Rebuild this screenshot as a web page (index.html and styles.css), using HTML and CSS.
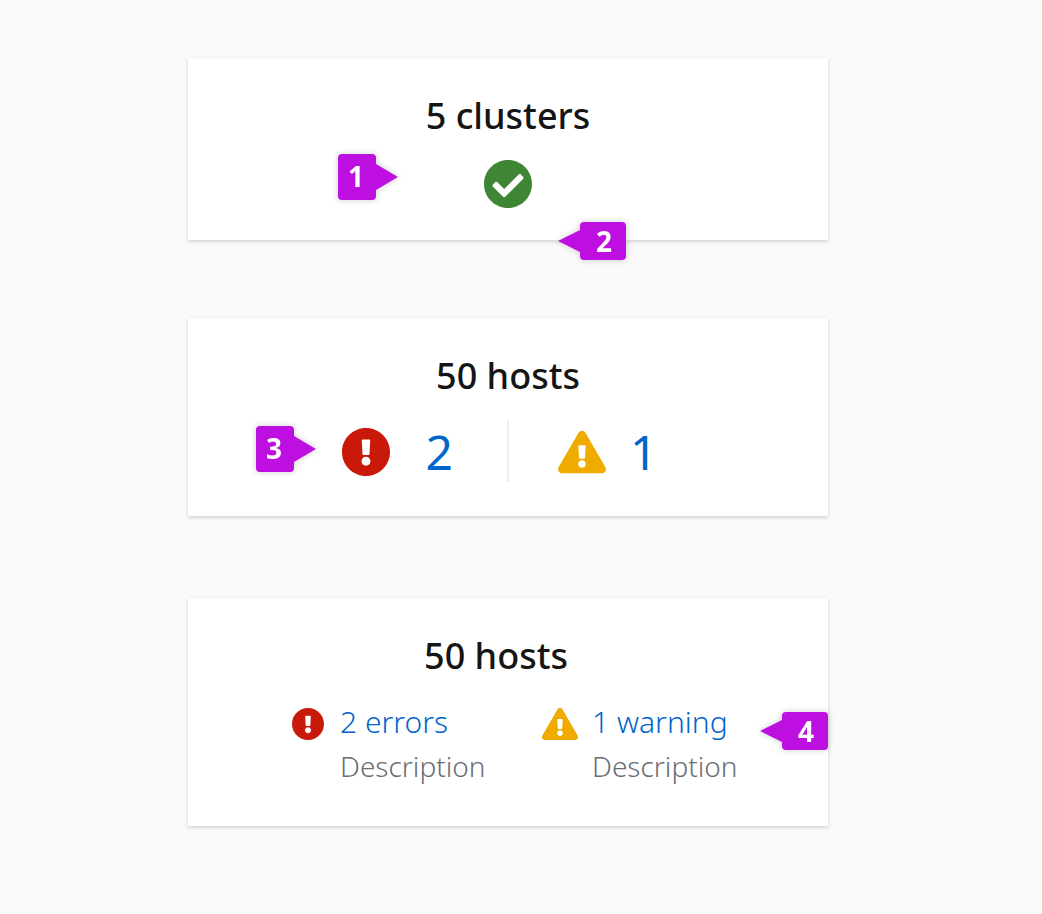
FILE: index.html
```html
<!DOCTYPE html>
<html lang="en">
<head>
<meta charset="utf-8">
<title>Aggregate status cards</title>
<link rel="stylesheet" href="styles.css">
</head>
<body>
<svg class="sprite" aria-hidden="true">
  <symbol id="check" viewBox="8 8 496 496"><path d="M504 256c0 136.967-111.033 248-248 248S8 392.967 8 256 119.033 8 256 8s248 111.033 248 248zM227.314 387.314l184-184c6.248-6.248 6.248-16.379 0-22.627l-22.627-22.627c-6.248-6.249-16.379-6.249-22.628 0L216 308.118l-70.059-70.059c-6.248-6.248-16.379-6.248-22.628 0l-22.627 22.627c-6.248 6.248-6.248 16.379 0 22.627l104 104c6.249 6.249 16.379 6.249 22.628.001z"/></symbol>
  <symbol id="error" viewBox="8 8 496 496"><path d="M504 256c0 136.997-111.043 248-248 248S8 392.997 8 256C8 119.083 119.043 8 256 8s248 111.083 248 248zm-248 50c-25.405 0-46 20.595-46 46s20.595 46 46 46 46-20.595 46-46-20.595-46-46-46zm-43.673-165.346l7.418 136c.347 6.364 5.609 11.346 11.982 11.346h48.546c6.373 0 11.635-4.982 11.982-11.346l7.418-136c.375-6.874-5.098-12.654-11.982-12.654h-63.383c-6.884 0-12.356 5.78-11.981 12.654z"/></symbol>
  <symbol id="warning" viewBox="0 0 576 512"><path d="M569.517 440.013C587.975 472.007 564.806 512 527.94 512H48.054c-36.937 0-59.999-40.055-41.577-71.987L246.423 23.985c18.467-32.009 64.72-31.951 83.154 0l239.94 416.028zM288 354c-25.405 0-46 20.595-46 46s20.595 46 46 46 46-20.595 46-46-20.595-46-46-46zm-43.673-165.346l7.418 136c.347 6.364 5.609 11.346 11.982 11.346h48.546c6.373 0 11.635-4.982 11.982-11.346l7.418-136c.375-6.874-5.098-12.654-11.982-12.654h-63.383c-6.884 0-12.356 5.78-11.981 12.654z"/></symbol>
</svg>
<main class="page">
  <section class="card">
    <h2 class="card-title">5 clusters</h2>
    <div class="status-row"><svg class="icon icon-large success" role="img" aria-label="Success"><use href="#check"/></svg></div>
    <span class="marker marker-right marker-1">1</span>
    <span class="marker marker-left marker-2">2</span>
  </section>
  <section class="card card-counts">
    <h2 class="card-title">50 hosts</h2>
    <div class="count-row">
      <div class="count count-start"><svg class="icon icon-large danger" role="img" aria-label="Errors"><use href="#error"/></svg><a class="count-link" href="#errors">2</a></div>
      <div class="divider"></div>
      <div class="count count-end"><svg class="icon icon-large caution" role="img" aria-label="Warnings"><use href="#warning"/></svg><a class="count-link" href="#warnings">1</a></div>
    </div>
    <span class="marker marker-right marker-3">3</span>
  </section>
  <section class="card card-detail">
    <h2 class="card-title">50 hosts</h2>
    <div class="detail-row">
      <div class="detail">
        <svg class="icon icon-small danger" role="img" aria-label="Errors"><use href="#error"/></svg>
        <div><a class="detail-link" href="#errors">2 errors</a><p class="detail-text">Description</p></div>
      </div>
      <div class="detail">
        <svg class="icon icon-small caution" role="img" aria-label="Warnings"><use href="#warning"/></svg>
        <div><a class="detail-link" href="#warnings">1 warning</a><p class="detail-text">Description</p></div>
      </div>
    </div>
    <span class="marker marker-left marker-4">4</span>
  </section>
</main>
</body>
</html>
```
FILE: styles.css
```css
* { box-sizing: border-box; }
body { margin: 0; background: #fafafa; color: #151515; font-family: "Noto Sans", "Open Sans", sans-serif; }
.sprite { position: absolute; width: 0; height: 0; }
.page { display: flex; flex-direction: column; gap: 78px; padding: 58px 214px 80px 188px; }
.card { position: relative; padding: 36px 32px 32px; background: #fff; box-shadow: 0 2px 4px rgba(3, 3, 3, .13), 0 0 4px rgba(3, 3, 3, .06); }
.card-title { margin: 0; font-size: 36px; line-height: 44px; font-weight: 500; text-align: center; }
.icon { display: block; flex: none; fill: currentColor; }
.icon-large { width: 48px; height: 48px; }
.icon-small { width: 36px; height: 32px; }
.success { color: #3e8635; }
.danger { color: #c9190b; }
.caution { color: #f0ab00; }
.status-row { display: flex; justify-content: center; padding-top: 22px; }
.card-counts { padding-bottom: 34px; }
.count-row { display: grid; grid-template-columns: 1fr 2px 1fr; padding-top: 22px; }
.divider { background: #ededed; }
.count { display: flex; align-items: center; height: 62px; padding-top: 2px; gap: 36px; }
.count-start { justify-content: flex-end; padding-right: 54px; }
.count-end { padding-left: 49px; gap: 24px; }
a { color: #06c; text-decoration: none; }
.count-link { font-size: 48px; line-height: 60px; }
.card-detail { margin-top: 4px; padding-bottom: 38px; }
.card-detail .card-title { padding-right: 24px; }
.detail-row { display: grid; grid-template-columns: 252px 1fr; padding: 22px 0 0 70px; }
.detail { display: flex; gap: 14px; }
.detail .icon { margin-top: 8px; }
.detail-link { display: block; font-size: 30px; line-height: 44px; font-weight: 300; }
.detail-text { margin: 0; font-size: 28px; line-height: 44px; font-weight: 300; color: #6a6e73; }
.marker { position: absolute; display: flex; align-items: center; justify-content: center; border-radius: 4px; background: #bd10e0; color: #fff; font-family: "Open Sans", "Noto Sans", sans-serif; font-size: 28px; line-height: 36px; font-weight: 700; filter: drop-shadow(0 0 3px rgba(0, 0, 0, .2)); }
.marker::after { content: ""; position: absolute; top: 50%; width: 22px; height: 26px; background: #bd10e0; transform: translateY(-50%); }
.marker-right { width: 38px; height: 46px; padding: 0 2px 2px 0; }
.marker-right::after { left: 100%; clip-path: polygon(0 0, 100% 50%, 0 100%); }
.marker-left { width: 46px; height: 38px; padding-left: 2px; }
.marker-left::after { right: 100%; height: 22px; clip-path: polygon(100% 0, 0 50%, 100% 100%); }
.marker-1 { top: 96px; left: 150px; }
.marker-2 { top: 164px; left: 392px; }
.marker-3 { top: 108px; left: 68px; }
.marker-4 { top: 114px; right: 0; }
```
